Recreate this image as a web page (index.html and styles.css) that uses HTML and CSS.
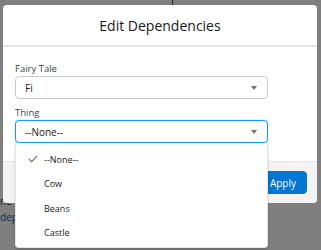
FILE: index.html
```html
<!DOCTYPE html>
<html lang="en">
<head>
    <meta charset="UTF-8">
    <title>Edit Dependencies</title>
    <link rel="stylesheet" href="styles.css">
</head>
<body>
    <div class="page">
        <div class="page-line"></div>
        <div class="page-text">
            <span class="dark">ne-</span>
            <span class="link">depe</span>
        </div>
    </div>
    <div class="backdrop"></div>

    <section class="modal">
        <header class="modal-header">
            <h2>Edit Dependencies</h2>
        </header>
        <div class="modal-body">
            <div class="field">
                <label>Fairy Tale</label>
                <div class="combo">
                    <span>Fi</span>
                    <i class="caret"></i>
                </div>
            </div>
            <div class="field">
                <label>Thing</label>
                <div class="combo focus">
                    <span>--None--</span>
                    <i class="caret"></i>
                </div>
                <ul class="listbox">
                    <li class="selected">
                        <svg class="check" viewBox="0 0 10 8" width="10" height="8"><path d="M0.8 3.8 L3.6 6.6 L9.2 0.8" fill="none" stroke="#706e6b" stroke-width="1.2"/></svg>
                        --None--
                    </li>
                    <li>Cow</li>
                    <li>Beans</li>
                    <li>Castle</li>
                </ul>
            </div>
        </div>
        <footer class="modal-footer">
            <button class="btn">Cancel</button>
            <button class="btn brand">Apply</button>
        </footer>
    </section>
</body>
</html>
```

FILE: styles.css
```css
:root {
    --overlay: #7f7f7f;
    --text: #181818;
    --label: #444444;
    --border: #c9c9c9;
    --focus: #1b96ff;
    --brand: #0176d3;
    --footer: #f3f3f3;
}

body {
    margin: 0;
    width: 321px;
    height: 250px;
    overflow: hidden;
    background-color: #ffffff;
    font-family: "Open Sans", "Noto Sans", sans-serif;
    color: var(--text);
}

.page {
    height: 250px;
    position: relative;
}

.page-line {
    position: absolute;
    left: 172px;
    top: 0;
    width: 1px;
    height: 10px;
    background-color: #555;
}

.page-text {
    position: absolute;
    left: 0;
    top: 193px;
    font-size: 10px;
    line-height: 16px;
    display: flex;
    flex-direction: column;
}

.dark {
    color: #222;
}

.link {
    color: #0b5cab;
}

.backdrop {
    position: absolute;
    inset: 0;
    background-color: rgba(0, 0, 0, 0.5);
}

.modal {
    position: absolute;
    left: 3px;
    top: 5px;
    width: 314px;
    height: 198px;
    background-color: #ffffff;
    border-radius: 4px;
    display: flex;
    flex-direction: column;
}

.modal-header {
    height: 40px;
    border-bottom: 2px solid #e5e5e5;
    display: flex;
    align-items: center;
    justify-content: center;
}

.modal-header h2 {
    margin: 0;
    font-size: 14px;
    font-weight: 400;
    color: #181818;
}

.modal-body {
    flex: 1;
    padding: 15px 49px 0 12px;
    position: relative;
}

.field {
    position: relative;
    margin-bottom: 7px;
}

.field label {
    display: block;
    font-size: 9.5px;
    line-height: 13px;
    color: var(--label);
    margin-bottom: 1px;
}

.combo {
    height: 21px;
    border: 1px solid var(--border);
    border-radius: 4px;
    display: flex;
    align-items: center;
    justify-content: space-between;
    padding: 0 9px;
    font-size: 10px;
}

.combo.focus {
    border-color: var(--focus);
    box-shadow: 0 0 1px var(--focus);
}

.caret {
    width: 0;
    height: 0;
    border-left: 3.5px solid transparent;
    border-right: 3.5px solid transparent;
    border-top: 4px solid #747474;
    margin-right: 1px;
}

.listbox {
    position: absolute;
    left: 0;
    right: 0;
    top: 37px;
    z-index: 2;
    margin: 0;
    padding: 4px 0 2px;
    list-style: none;
    background-color: #ffffff;
    border: 1px solid #e5e5e5;
    border-top: none;
    border-radius: 0 0 4px 4px;
    box-shadow: 0 2px 3px rgba(0, 0, 0, 0.16);
}

.listbox li {
    height: 24.5px;
    display: flex;
    align-items: center;
    padding-left: 28px;
    font-size: 9px;
    color: #181818;
}

.check {
    margin-left: -16px;
    margin-right: 6px;
}

.modal-footer {
    height: 41px;
    background-color: var(--footer);
    border-top: 1px solid #e5e5e5;
    border-radius: 0 0 4px 4px;
    display: flex;
    align-items: center;
    justify-content: flex-end;
    gap: 4px;
    padding-right: 10px;
}

.btn {
    height: 23px;
    padding: 0 10px;
    font-family: inherit;
    font-size: 10px;
    border: 1px solid var(--border);
    border-radius: 4px;
    background-color: #ffffff;
    color: var(--brand);
}

.btn.brand {
    background-color: var(--brand);
    border-color: var(--brand);
    color: #ffffff;
}
```
